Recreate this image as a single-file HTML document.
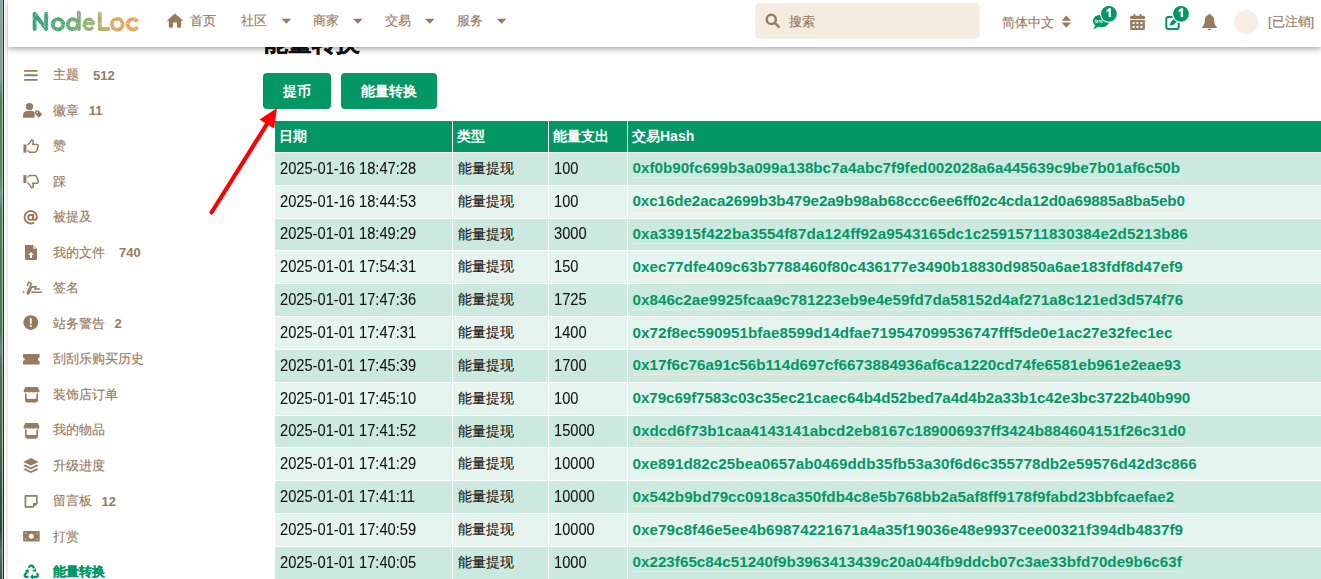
<!DOCTYPE html>
<html><head><meta charset="utf-8">
<style>
*{box-sizing:border-box;margin:0;padding:0}
html,body{width:1321px;height:579px;overflow:hidden;background:#fff;font-family:"Liberation Sans",sans-serif;color:#111}
.strip{position:absolute;left:0;top:0;width:2px;height:579px;background:linear-gradient(#8ba2a0 0,#7e9a92 80px,#4f7c58 100px,#5a8a6a 180px,#6f9e88 195px,#507c5a 210px,#4e7558 330px,#6a7e90 350px,#4e7258 365px,#44644e 450px,#34503e 500px,#2e4638 530px,#50706a 550px,#3a5848 579px)}
.strip2{position:absolute;left:3px;top:0;width:1px;height:579px;background:#1f302e}
.strip3{position:absolute;left:2px;top:0;width:1px;height:579px;background:#a9bdb6}
.vline{position:absolute;left:4px;top:47px;width:4px;height:532px;background:linear-gradient(90deg,#fbfbfb 0,#f5f5f5 2px,#e9e9e9 3px,#eee 4px)}
.hdr{position:absolute;left:8px;top:0;width:1313px;height:47px;background:#fff;box-shadow:0 2px 6px rgba(0,0,0,.35);z-index:5}
.abs{position:absolute}
.br{color:#987a5e}
.nav{-webkit-text-stroke:.15px currentColor;position:absolute;top:13px;font-size:13px;line-height:16px;color:#987a5e;white-space:nowrap}
.caret{position:absolute;width:0;height:0;border-left:5px solid transparent;border-right:5px solid transparent;border-top:5px solid #987a5e}
.side{position:absolute;left:0;width:250px;height:30px}
.side .ic{position:absolute;left:22px;top:0}
.side .tx{position:absolute;left:53px;font-size:14px;line-height:16px;color:#987a5e;white-space:nowrap}
.side .ct{font-weight:bold;font-size:13px}
.btn{position:absolute;top:73px;height:36px;background:#029765;border-radius:4px;color:#fff;font-weight:bold;font-size:14px;line-height:36px;text-align:center}
table{position:absolute;left:275px;top:121px;border-collapse:separate;border-spacing:0;font-size:15px;table-layout:fixed;width:1100px}
th{background:#029765;color:#fff;font-weight:bold;font-size:14px;text-align:left;height:32px;padding:0 0 0 4px;border-right:1px solid #fff;border-bottom:1px solid #fff}
td{-webkit-text-stroke:.08px currentColor;height:32.83px;padding:0 0 2px 4.5px;border-right:1px solid #fff;border-bottom:1px solid #fff;color:#111;white-space:nowrap}
tr.o td{background:#cce9df}
tr.e td{background:#e5f4ef}
td.h{-webkit-text-stroke:0;font-weight:bold;color:#029765;font-size:15.2px}
td.h span{border-bottom:1px solid #f2e6da;padding-bottom:1px}
.d{position:relative;top:.8px;display:inline-block;font-size:15.6px;transform:scaleX(.94);transform-origin:0 50%}
.cj{font-size:14px;padding:1px 0 1px 4.5px!important}
.stx{-webkit-text-stroke:.15px currentColor;position:absolute;left:53px;font-size:13px;line-height:16px;color:#987a5e;white-space:nowrap}
.sct{position:absolute;font-size:13px;font-weight:bold;line-height:16px;color:#987a5e}
</style></head><body>
<div class="strip"></div><div class="strip3"></div><div class="strip2"></div><div class="vline"></div>

<!-- title + buttons -->
<div class="abs" style="left:264px;top:29px;font-size:24px;font-weight:bold;line-height:28px;color:#111;-webkit-text-stroke:.3px #111">能量转换</div>
<div class="btn" style="left:263px;width:68px">提币</div>
<div class="btn" style="left:341px;width:96px">能量转换</div>

<table>
<tr><th style="width:178px">日期</th><th style="width:96px">类型</th><th style="width:79px">能量支出</th><th style="width:747px">交易Hash</th></tr>
<tr class="o"><td><span class="d">2025-01-16 18:47:28</span></td><td class="cj">能量提现</td><td><span class="d">100</span></td><td class="h"><span style="letter-spacing:0.006px">0xf0b90fc699b3a099a138bc7a4abc7f9fed002028a6a445639c9be7b01af6c50b</span></td></tr>
<tr class="e"><td><span class="d">2025-01-16 18:44:53</span></td><td class="cj">能量提现</td><td><span class="d">100</span></td><td class="h"><span style="letter-spacing:-0.088px">0xc16de2aca2699b3b479e2a9b98ab68ccc6ee6ff02c4cda12d0a69885a8ba5eb0</span></td></tr>
<tr class="o"><td><span class="d">2025-01-01 18:49:29</span></td><td class="cj">能量提现</td><td><span class="d">3000</span></td><td class="h"><span style="letter-spacing:0.122px">0xa33915f422ba3554f87da124ff92a9543165dc1c25915711830384e2d5213b86</span></td></tr>
<tr class="e"><td><span class="d">2025-01-01 17:54:31</span></td><td class="cj">能量提现</td><td><span class="d">150</span></td><td class="h"><span style="letter-spacing:0.072px">0xec77dfe409c63b7788460f80c436177e3490b18830d9850a6ae183fdf8d47ef9</span></td></tr>
<tr class="o"><td><span class="d">2025-01-01 17:47:36</span></td><td class="cj">能量提现</td><td><span class="d">1725</span></td><td class="h"><span style="letter-spacing:0.026px">0x846c2ae9925fcaa9c781223eb9e4e59fd7da58152d4af271a8c121ed3d574f76</span></td></tr>
<tr class="e"><td><span class="d">2025-01-01 17:47:31</span></td><td class="cj">能量提现</td><td><span class="d">1400</span></td><td class="h"><span style="letter-spacing:0.046px">0x72f8ec590951bfae8599d14dfae719547099536747fff5de0e1ac27e32fec1ec</span></td></tr>
<tr class="o"><td><span class="d">2025-01-01 17:45:39</span></td><td class="cj">能量提现</td><td><span class="d">1700</span></td><td class="h"><span style="letter-spacing:0.032px">0x17f6c76a91c56b114d697cf6673884936af6ca1220cd74fe6581eb961e2eae93</span></td></tr>
<tr class="e"><td><span class="d">2025-01-01 17:45:10</span></td><td class="cj">能量提现</td><td><span class="d">100</span></td><td class="h"><span style="letter-spacing:-0.071px">0x79c69f7583c03c35ec21caec64b4d52bed7a4d4b2a33b1c42e3bc3722b40b990</span></td></tr>
<tr class="o"><td><span class="d">2025-01-01 17:41:52</span></td><td class="cj">能量提现</td><td><span class="d">15000</span></td><td class="h"><span style="letter-spacing:0.040px">0xdcd6f73b1caa4143141abcd2eb8167c189006937ff3424b884604151f26c31d0</span></td></tr>
<tr class="e"><td><span class="d">2025-01-01 17:41:29</span></td><td class="cj">能量提现</td><td><span class="d">10000</span></td><td class="h"><span style="letter-spacing:0.054px">0xe891d82c25bea0657ab0469ddb35fb53a30f6d6c355778db2e59576d42d3c866</span></td></tr>
<tr class="o"><td><span class="d">2025-01-01 17:41:11</span></td><td class="cj">能量提现</td><td><span class="d">10000</span></td><td class="h"><span style="letter-spacing:0.020px">0x542b9bd79cc0918ca350fdb4c8e5b768bb2a5af8ff9178f9fabd23bbfcaefae2</span></td></tr>
<tr class="e"><td><span class="d">2025-01-01 17:40:59</span></td><td class="cj">能量提现</td><td><span class="d">10000</span></td><td class="h"><span style="letter-spacing:0.063px">0xe79c8f46e5ee4b69874221671a4a35f19036e48e9937cee00321f394db4837f9</span></td></tr>
<tr class="o"><td><span class="d">2025-01-01 17:40:05</span></td><td class="cj">能量提现</td><td><span class="d">1000</span></td><td class="h"><span style="letter-spacing:0.020px">0x223f65c84c51240f9b3963413439c20a044fb9ddcb07c3ae33bfd70de9b6c63f</span></td></tr>
</table>

<!-- red arrow -->
<svg class="abs" style="left:0;top:0;z-index:3" width="400" height="300">
<line x1="211.5" y1="212.5" x2="272" y2="116" stroke="#ff0000" stroke-width="4.2" stroke-linecap="round"/>
<polygon points="277,108 259.5,119.5 274,128.5" fill="#ff0000"/>
</svg>

<!-- HEADER -->
<div class="hdr"></div>
<div id="hdrc" style="position:absolute;left:0;top:0;width:1321px;height:47px;z-index:6">
<svg class="abs" style="left:0;top:0" width="1321" height="47">
<defs>
<linearGradient id="lg" x1="32" y1="0" x2="139" y2="0" gradientUnits="userSpaceOnUse">
<stop offset="0" stop-color="#24a06c"/><stop offset="0.3" stop-color="#4aa872"/><stop offset="0.5" stop-color="#86ac6c"/><stop offset="0.65" stop-color="#b4ae6a"/><stop offset="0.8" stop-color="#dea256"/><stop offset="1" stop-color="#f3a050"/>
</linearGradient>
<filter id="tex" x="0" y="0" width="1321" height="47" filterUnits="userSpaceOnUse"><feTurbulence type="fractalNoise" baseFrequency="1.1" numOctaves="1" seed="7" result="n"/><feColorMatrix in="n" type="matrix" values="0 0 0 0 0  0 0 0 0 0  0 0 0 0 0  0 0 0 -3.1 2.75" result="m"/><feComposite in="SourceGraphic" in2="m" operator="in"/></filter>
</defs>
<g filter="url(#tex)" fill="none" stroke="url(#lg)" stroke-opacity=".95" stroke-width="3.9" stroke-linecap="round" stroke-linejoin="round">
<polyline points="34.6,29 34.6,13.8 46.2,29 46.2,13.8"/>
<circle cx="58" cy="24.3" r="5.2"/>
<circle cx="72.8" cy="24.3" r="5"/>
<line x1="78.8" y1="12.6" x2="78.8" y2="29"/>
<path d="M85,23.6 H93.6 A4.7,5 0 1 0 92.1,28" stroke-width="3.3"/>
<polyline points="99.8,13.8 99.8,29 108.3,29"/>
<circle cx="117.3" cy="24.3" r="5.4"/>
<path d="M136.4,20.5 A5.2,5.2 0 1 0 136.4,28.1"/>
</g>
<!-- home -->
<g fill="#987a5e">
<path d="M175,13.6 L183.3,20.8 L181.2,20.8 L181.2,26.6 Q181.2,27.7 180.1,27.7 L177.9,27.7 Q176.9,27.7 176.9,26.6 L176.9,22.6 L173.1,22.6 L173.1,26.6 Q173.1,27.7 172.1,27.7 L169.9,27.7 Q168.8,27.7 168.8,26.6 L168.8,20.8 L166.7,20.8 Z"/>
</g>
<!-- carets -->
<g fill="#987a5e">
<path d="M281.6,18.8 H291.2 L286.4,23.8 Z"/>
<path d="M353.1,18.8 H362.7 L357.9,23.8 Z"/>
<path d="M425,18.8 H434.6 L429.8,23.8 Z"/>
<path d="M496.8,18.8 H506.4 L501.6,23.8 Z"/>
</g>
<!-- search box -->
<rect x="755.3" y="3.1" width="224.4" height="35.5" rx="4" fill="#f5ebe1"/>
<g fill="none" stroke="#987a5e" stroke-width="2.4" stroke-linecap="round">
<circle cx="771.3" cy="19.4" r="4.6"/>
<line x1="775.2" y1="23.3" x2="778.8" y2="26.9"/>
</g>
<!-- sort -->
<g fill="#987a5e">
<path d="M1066.3,15.5 L1071,20.8 H1061.6 Z"/>
<path d="M1061.6,22.4 H1071 L1066.3,27.8 Z"/>
</g>
<!-- chat sms -->
<g fill="#029765">
<path d="M1101.2,14.8 C1105.8,14.8 1109.4,17.6 1109.4,21 C1109.4,24.4 1105.8,27.2 1101.2,27.2 C1100,27.2 1099,27 1098,26.7 C1096.8,27.8 1095,28.9 1093.2,28.9 C1094.2,27.9 1094.9,26.8 1095.2,25.5 C1093.9,24.3 1093,22.8 1093,21 C1093,17.6 1096.6,14.8 1101.2,14.8 Z"/>
</g>
<path d="M1096.7,20.1 H1095.2 V21.45 H1096.7 V22.8 H1095.2 M1097.6,22.9 V20.1 L1098.75,21.5 L1099.9,20.1 V22.9 M1102.3,20.1 H1100.8 V21.45 H1102.3 V22.8 H1100.8" fill="none" stroke="#fff" stroke-opacity=".85" stroke-width=".8"/>
<circle cx="1108.9" cy="13.9" r="8.9" fill="#fff"/>
<circle cx="1108.9" cy="13.9" r="7.9" fill="#029765"/>
<path d="M1106.6,10 L1109,8.2 H1111 V17 H1108.6 V11 L1106.6,12.2 Z" fill="#fff"/>
<!-- calendar -->
<g fill="#987a5e">
<rect x="1133.6" y="13.9" width="1.9" height="3" rx=".6"/>
<rect x="1139.6" y="13.9" width="1.9" height="3" rx=".6"/>
<path d="M1131.2,15.8 H1143.9 Q1144.9,15.8 1144.9,16.8 V18.9 H1130.2 V16.8 Q1130.2,15.8 1131.2,15.8 Z"/>
<path d="M1130.2,20 H1144.9 V28.9 Q1144.9,29.9 1143.9,29.9 H1131.2 Q1130.2,29.9 1130.2,28.9 Z"/>
</g>
<g fill="#fff">
<rect x="1132.6" y="22" width="2" height="2"/><rect x="1136.4" y="22" width="2" height="2"/><rect x="1140.5" y="22" width="2" height="2"/>
<rect x="1132.6" y="25.9" width="2" height="2"/><rect x="1136.4" y="25.9" width="2" height="2"/><rect x="1140.5" y="25.9" width="2" height="2"/>
</g>
<!-- edit -->
<path d="M1172.5,17.1 H1168.3 Q1166.3,17.1 1166.3,19.1 V26.9 Q1166.3,28.9 1168.3,28.9 H1176.7 Q1178.7,28.9 1178.7,26.9 V23" fill="none" stroke="#029765" stroke-width="2"/>
<path d="M1169.8,25.8 L1170.8,22 L1175.5,17.5 L1178.2,20.2 L1173.6,24.8 Z" fill="#029765"/>
<circle cx="1181" cy="13.9" r="8.9" fill="#fff"/>
<circle cx="1181" cy="13.9" r="7.9" fill="#029765"/>
<path d="M1178.7,10 L1181.1,8.2 H1183.1 V17 H1180.7 V11 L1178.7,12.2 Z" fill="#fff"/>
<!-- bell -->
<path d="M1209.5,13.8 Q1210.6,13.8 1210.6,15 Q1214.2,15.9 1214.2,20.5 Q1214.2,25 1217,27.3 V28 H1202 V27.3 Q1204.8,25 1204.8,20.5 Q1204.8,15.9 1208.4,15 Q1208.4,13.8 1209.5,13.8 Z" fill="#987a5e"/>
<path d="M1207.3,28.8 H1211.7 Q1211.7,30.2 1209.5,30.2 Q1207.3,30.2 1207.3,28.8 Z" fill="#987a5e"/>
<!-- avatar -->
<circle cx="1246" cy="22" r="12" fill="#f7ede4"/>
</svg>
<div class="nav" style="left:190px">首页</div>
<div class="nav" style="left:241px">社区</div>
<div class="nav" style="left:313px">商家</div>
<div class="nav" style="left:385px">交易</div>
<div class="nav" style="left:457px">服务</div>
<div class="nav" style="left:789px;top:14px">搜索</div>
<div class="nav" style="left:1002px;top:14.5px">简体中文</div>
<div class="nav" style="left:1268px;top:14px">[已注销]</div>
</div>

<!-- SIDEBAR -->
<svg class="abs" style="left:0;top:0;z-index:2" width="60" height="579">
<g fill="#987a5e">
<!-- bars -->
<rect x="24" y="69.9" width="13.8" height="1.9" rx=".9"/><rect x="24" y="74.3" width="13.8" height="1.9" rx=".9"/><rect x="24" y="78.9" width="13.8" height="1.9" rx=".9"/>
<!-- user tag -->
<circle cx="29.5" cy="106.6" r="3.7"/>
<path d="M23,117.7 V115.6 Q23,111.1 27.5,111.1 H31.5 Q33.5,111.1 34.6,112 L34.6,117.7 Z"/>
<path d="M35.2,110.6 L38.6,110.6 L42.2,114.2 L38.9,117.7 L35.2,114.1 Z"/>
<circle cx="37.2" cy="112.5" r=".8" fill="#fff"/>
<!-- thumbs up -->
<rect x="23.4" y="144.5" width="3" height="8.1"/>
<path d="M27.5,145 L30.2,142.5 Q31,140.2 31.8,140 Q33.6,140 33.2,142.3 L32.6,144.4 L37,144.4 Q38.5,144.6 38.3,146.2 Q37.8,147 37.7,148 Q37.4,149 37.1,150 Q36.5,152.2 35,152.2 L29.5,152.2 L27.5,150.5" fill="none" stroke="#987a5e" stroke-width="1.5" stroke-linejoin="round"/>
<!-- thumbs down -->
<rect x="23.4" y="175.1" width="3" height="8"/>
<path d="M27.5,182.8 L30.2,185.2 Q31,187.5 31.8,187.7 Q33.6,187.7 33.2,185.4 L32.6,183.3 L37,183.3 Q38.5,183.1 38.3,181.5 Q37.8,180.7 37.7,179.7 Q37.4,178.7 37.1,177.7 Q36.5,175.5 35,175.5 L29.5,175.5 L27.5,177.2" fill="none" stroke="#987a5e" stroke-width="1.5" stroke-linejoin="round"/>
<!-- file upload -->
<path d="M25,245.1 H33 L37,249.1 V259 Q37,260 36,260 H26 Q25,260 25,259 Z"/>
<path d="M31,252 L34,255 H32 V258 H30 V255 H28 Z" fill="#fff"/>
<path d="M33,245.1 V249.1 H37" fill="#d9cbbd"/>
<!-- exclamation -->
<circle cx="30.8" cy="322.6" r="7.4"/>
<rect x="29.9" y="318.2" width="1.8" height="5.8" fill="#fff"/>
<rect x="29.9" y="325.2" width="1.8" height="1.8" fill="#fff"/>
<!-- ticket -->
<path d="M23.6,354 H39 Q39.6,354 39.6,354.6 V357.6 A1.7,1.7 0 0 0 39.6,361 V364 Q39.6,364.6 39,364.6 H23.6 Q23,364.6 23,364 V361 A1.7,1.7 0 0 0 23,357.6 V354.6 Q23,354 23.6,354 Z"/>
<!-- store 1 -->
<path d="M25.3,386.9 H37.8 L39.6,391 Q39.6,392.6 38,392.6 Q36.8,392.6 35.8,391.8 Q34.8,392.6 33.3,392.6 Q32,392.6 31.5,391.8 Q30.6,392.6 29.3,392.6 Q28,392.6 27.2,391.8 Q26.2,392.6 25,392.6 Q23.5,392.6 23.5,391 Z"/>
<path d="M25.8,393.5 V400.2 Q25.8,401.7 27.3,401.7 H35.7 Q37.2,401.7 37.2,400.2 V393.5" fill="none" stroke="#987a5e" stroke-width="1.7"/>
<rect x="25.8" y="398.8" width="11.4" height="2.9"/>
<!-- store 2 -->
<path d="M25.3,423 H37.8 L39.6,427.1 Q39.6,428.7 38,428.7 Q36.8,428.7 35.8,427.9 Q34.8,428.7 33.3,428.7 Q32,428.7 31.5,427.9 Q30.6,428.7 29.3,428.7 Q28,428.7 27.2,427.9 Q26.2,428.7 25,428.7 Q23.5,428.7 23.5,427.1 Z"/>
<path d="M25.8,429.6 V436.3 Q25.8,437.8 27.3,437.8 H35.7 Q37.2,437.8 37.2,436.3 V429.6" fill="none" stroke="#987a5e" stroke-width="1.7"/>
<rect x="25.8" y="434.9" width="11.4" height="2.9"/>
<!-- layers -->
<path d="M30.9,458 L38.5,461.9 L30.9,465.6 L23.3,461.9 Z"/>
<path d="M25.2,464.4 L30.9,467.4 L36.6,464.4 L38.5,465.7 L30.9,469.5 L23.3,465.7 Z"/>
<path d="M25.2,468.3 L30.9,471.2 L36.6,468.3 L38.5,469.5 L30.9,473.1 L23.3,469.5 Z"/>
<!-- sticky note -->
<path d="M25.4,495.9 H36.8 V503.3 L33,506.9 H25.4 Z" fill="none" stroke="#987a5e" stroke-width="1.7" stroke-linejoin="round"/>
<path d="M36.8,503 H33 V506.9 Z"/>
<!-- money -->
<rect x="23.1" y="530.9" width="16.6" height="10.6" rx=".8"/>
<circle cx="31.3" cy="536.2" r="2.5" fill="#fff"/>
<circle cx="25.6" cy="533.2" r=".6" fill="#fff"/><circle cx="37.2" cy="533.2" r=".6" fill="#fff"/>
<circle cx="25.6" cy="539.2" r=".6" fill="#fff"/><circle cx="37.2" cy="539.2" r=".6" fill="#fff"/>
</g>
<!-- at -->
<g fill="none" stroke="#987a5e" stroke-width="1.9" stroke-linecap="round">
<circle cx="30.7" cy="217.4" r="2.5"/>
<path d="M33.2,214.6 V218.2 Q33.2,219.9 34.8,219.9 Q36.9,219.9 36.9,216.8 A6.2,6.2 0 1 0 33.4,222.8"/>
</g>
<!-- signature -->
<g fill="none" stroke="#987a5e" stroke-width="1.6" stroke-linecap="round" stroke-linejoin="round">
<path d="M27.6,285.6 Q27.5,282.5 29.3,282.5 Q31.2,282.6 31,284.5 Q30.5,287 28.5,290 Q27,292.5 27.4,293.8 Q28,294.5 29,293 Q30.5,290.5 31.4,287.3 L36,286.6 L34.8,289 H39.3"/>
<path d="M31.9,292.3 H41.2"/>
</g>
<circle cx="23.6" cy="292.2" r=".9" fill="#987a5e"/>
<!-- recycle -->
<g fill="none" stroke="#029765" stroke-width="2.2" stroke-linecap="butt" stroke-linejoin="round">
<path d="M28.6,567.6 Q30,565.2 31.6,565.4 Q32.6,565.6 33.6,567.6 L34,568.4"/>
<path d="M27.2,571.5 L24.8,574.8 Q23.9,576.7 26,576.8 L28.4,576.8"/>
<path d="M36.7,573 L37.7,574.8 Q38.6,576.8 36.5,576.8 L32,576.8"/>
</g>
<g fill="#029765">
<path d="M32.1,570.7 L36.3,568.2 L35.7,571.9 Z"/>
<path d="M28.6,569 L24.6,570.6 L28.6,573 Z"/>
<path d="M30,576.8 L33,573.9 L33,579.7 Z"/>
</g>
</svg>
<div class="stx" style="top:67.0px">主题</div>
<div class="sct" style="top:67.5px;left:93.0px">512</div>
<div class="stx" style="top:102.5px">徽章</div>
<div class="sct" style="top:103.0px;left:88.7px">11</div>
<div class="stx" style="top:138.0px">赞</div>
<div class="stx" style="top:173.5px">踩</div>
<div class="stx" style="top:209.0px">被提及</div>
<div class="stx" style="top:244.5px">我的文件</div>
<div class="sct" style="top:245.0px;left:119.0px">740</div>
<div class="stx" style="top:280.0px">签名</div>
<div class="stx" style="top:315.5px">站务警告</div>
<div class="sct" style="top:316.0px;left:114.4px">2</div>
<div class="stx" style="top:351.0px">刮刮乐购买历史</div>
<div class="stx" style="top:386.5px">装饰店订单</div>
<div class="stx" style="top:422.0px">我的物品</div>
<div class="stx" style="top:457.5px">升级进度</div>
<div class="stx" style="top:493.0px">留言板</div>
<div class="sct" style="top:493.5px;left:101.6px">12</div>
<div class="stx" style="top:528.5px">打赏</div>
<div class="stx" style="top:564.0px;color:#029765;font-weight:bold">能量转换</div>

</body></html>
